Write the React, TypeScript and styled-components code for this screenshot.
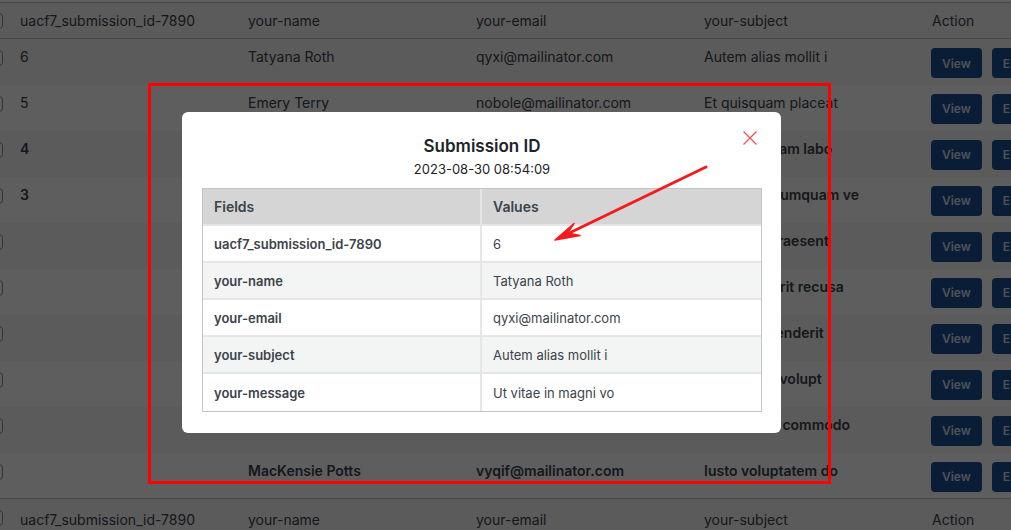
import React from "react";
import styled, { createGlobalStyle } from "styled-components";

const GlobalStyle = createGlobalStyle`
  html, body {
    margin: 0;
    padding: 0;
    overflow: hidden;
    background: #fff;
  }
  body {
    font-family: Inter, "Noto Sans", "Liberation Sans", sans-serif;
    color: #3c434a;
  }
`;

const Page = styled.div`
  position: relative;
  width: 1011px;
  height: 530px;
  overflow: hidden;
  padding-top: 2px;
  box-sizing: border-box;
  background: #fff;
`;

const ListTable = styled.table`
  margin-left: -23px;
  border-collapse: collapse;
  table-layout: fixed;
  width: 1142px;
  font-size: 14px;
  line-height: 16px;
  color: #3c434a;
`;

const HeadRow = styled.tr<{ $foot?: boolean }>`
  background: #f6f6f6;
  border-top: 1px solid #c3c4c7;
  border-bottom: ${(p) => (p.$foot ? "none" : "1px solid #c3c4c7")};

  th {
    height: 35px;
    padding: ${(p) => (p.$foot ? "3px 13px 0" : "0 13px")};
    text-align: left;
    font-weight: 400;
    vertical-align: middle;
    white-space: nowrap;
  }
`;

const BodyRow = styled.tr<{ $alt: boolean; $unread: boolean }>`
  background: ${(p) => (p.$alt ? "#fff" : "#f6f6f6")};
  font-weight: ${(p) => (p.$unread ? 600 : 400)};

  td {
    height: 46px;
    box-sizing: border-box;
    padding: 10px 13px 0;
    vertical-align: top;
    white-space: nowrap;
    overflow: hidden;
  }
`;

const CheckCell = styled.td`
  && {
    padding: 11px 0 0 10px;
  }
`;

const CheckHead = styled.th`
  && {
    padding: 0 0 0 10px;
  }
`;

const CheckBox = styled.span`
  display: block;
  width: 14px;
  height: 14px;
  border: 1px solid #8c8f94;
  border-radius: 4px;
  background: #fff;
`;

const Actions = styled.div`
  display: flex;
  gap: 10px;
  margin-top: -1px;
  margin-left: -1px;
`;

const ActionButton = styled.button`
  height: 30px;
  padding: 0 11px;
  border: none;
  border-radius: 4px;
  background: #1b4f96;
  color: #d3dbe6;
  font-family: inherit;
  font-size: 12px;
  font-weight: 600;
`;

const Overlay = styled.div`
  position: absolute;
  inset: 0;
  background: rgba(0, 0, 0, 0.63);
`;

const Modal = styled.div`
  position: absolute;
  left: 182px;
  top: 112px;
  width: 599px;
  box-sizing: border-box;
  padding: 24px 19px 21px 20px;
  background: #fff;
  border-radius: 6px;
  text-align: center;
`;

const CloseButton = styled.button`
  position: absolute;
  top: 18px;
  right: 23px;
  width: 16px;
  height: 16px;
  padding: 0;
  border: none;
  background: transparent;
  display: flex;
`;

const Title = styled.h2`
  margin: 0;
  font-size: 17px;
  line-height: 20px;
  font-weight: 600;
  color: #1d2327;
`;

const DateLine = styled.div`
  margin-top: 4px;
  font-size: 13px;
  line-height: 18px;
  color: #1d2327;
`;

const DetailTable = styled.table`
  margin-top: 10px;
  width: 100%;
  border: 1px solid #c3c4c7;
  border-collapse: separate;
  border-spacing: 0;
  text-align: left;
  color: #3c434a;

  th,
  td {
    height: 35px;
    padding: 0 10px 0 11px;
    border-bottom: 2px solid #e6e6e6;
    vertical-align: middle;
  }
  th:first-child,
  td:first-child {
    width: 50%;
    border-right: 2px solid #e6e6e6;
  }
  th {
    background: #d5d5d5;
    font-size: 14px;
    font-weight: 600;
  }
  tbody tr:last-child td {
    border-bottom: none;
    height: 37px;
  }
`;

const DetailRow = styled.tr<{ $alt: boolean }>`
  background: ${(p) => (p.$alt ? "#f3f4f4" : "#fff")};
  font-size: 13px;

  td:first-child {
    font-weight: 600;
  }
`;

const RedFrame = styled.div`
  position: absolute;
  left: 148px;
  top: 83px;
  width: 683px;
  height: 401px;
  box-sizing: border-box;
  border: 3px solid #ff0000;
  pointer-events: none;
`;

const ArrowLayer = styled.svg`
  position: absolute;
  left: 0;
  top: 0;
  pointer-events: none;
`;

const columns = ["uacf7_submission_id-7890", "your-name", "your-email", "your-subject"];

const rows = [
  { id: "6", name: "Tatyana Roth", email: "qyxi@mailinator.com", subject: "Autem alias mollit i", unread: false },
  { id: "5", name: "Emery Terry", email: "nobole@mailinator.com", subject: "Et quisquam placeat", unread: false },
  { id: "4", name: "Ria Ward", email: "jyleh@mailinator.com", subject: "Nisi quisquam labo", unread: true },
  { id: "3", name: "Hop Melton", email: "fuzo@mailinator.com", subject: "Quos etia numquam ve", unread: true },
  { id: "", name: "Ivor Mccall", email: "dajo@mailinator.com", subject: "Dolore ut praesent", unread: true },
  { id: "", name: "Leila Vance", email: "mecy@mailinator.com", subject: "Culpa dolo rit recusa", unread: true },
  { id: "", name: "Aline Boyd", email: "rila@mailinator.com", subject: "Aut reprehenderit", unread: true },
  { id: "", name: "Ori Knox", email: "xujo@mailinator.com", subject: "Dolores sit volupt", unread: true },
  { id: "", name: "Sade Fox", email: "wepa@mailinator.com", subject: "Temporis a commodo", unread: true },
  { id: "", name: "MacKensie Potts", email: "vyqif@mailinator.com", subject: "Iusto voluptatem do", unread: true },
];

const details = [
  ["uacf7_submission_id-7890", "6"],
  ["your-name", "Tatyana Roth"],
  ["your-email", "qyxi@mailinator.com"],
  ["your-subject", "Autem alias mollit i"],
  ["your-message", "Ut vitae in magni vo"],
];

const HeaderCells = () => (
  <>
    <CheckHead>
      <CheckBox />
    </CheckHead>
    {columns.map((c) => (
      <th key={c}>{c}</th>
    ))}
    <th>Action</th>
  </>
);

export default function App() {
  return (
    <Page>
      <GlobalStyle />
      <ListTable>
        <colgroup>
          <col style={{ width: 30 }} />
          <col style={{ width: 228 }} />
          <col style={{ width: 228 }} />
          <col style={{ width: 228 }} />
          <col style={{ width: 228 }} />
          <col style={{ width: 200 }} />
        </colgroup>
        <thead>
          <HeadRow>
            <HeaderCells />
          </HeadRow>
        </thead>
        <tbody>
          {rows.map((r, i) => (
            <BodyRow key={i} $alt={i % 2 === 1} $unread={r.unread}>
              <CheckCell>
                <CheckBox />
              </CheckCell>
              <td>{r.id}</td>
              <td>{r.name}</td>
              <td>{r.email}</td>
              <td>{r.subject}</td>
              <td>
                <Actions>
                  <ActionButton>View</ActionButton>
                  <ActionButton>Export</ActionButton>
                </Actions>
              </td>
            </BodyRow>
          ))}
        </tbody>
        <tfoot>
          <HeadRow $foot>
            <HeaderCells />
          </HeadRow>
        </tfoot>
      </ListTable>

      <Overlay />

      <Modal>
        <CloseButton aria-label="Close">
          <svg width="16" height="16" viewBox="0 0 16 16">
            <path d="M1.5 1.5 L14.5 14.5 M14.5 1.5 L1.5 14.5" stroke="#ef4f57" strokeWidth="1.2" fill="none" />
          </svg>
        </CloseButton>
        <Title>Submission ID</Title>
        <DateLine>2023-08-30 08:54:09</DateLine>
        <DetailTable>
          <thead>
            <tr>
              <th>Fields</th>
              <th>Values</th>
            </tr>
          </thead>
          <tbody>
            {details.map(([f, v], i) => (
              <DetailRow key={f} $alt={i % 2 === 1}>
                <td>{f}</td>
                <td>{v}</td>
              </DetailRow>
            ))}
          </tbody>
        </DetailTable>
      </Modal>

      <RedFrame />
      <ArrowLayer width="1011" height="530" viewBox="0 0 1011 530">
        <line x1="706" y1="167" x2="560" y2="237.5" stroke="#f31b1b" strokeWidth="3" strokeLinecap="round" />
        <path d="M555 240 L574 223.5 L567.5 233 L580 235.5 Z" fill="#f31b1b" stroke="#f31b1b" strokeWidth="1.5" strokeLinejoin="round" />
      </ArrowLayer>
    </Page>
  );
}
